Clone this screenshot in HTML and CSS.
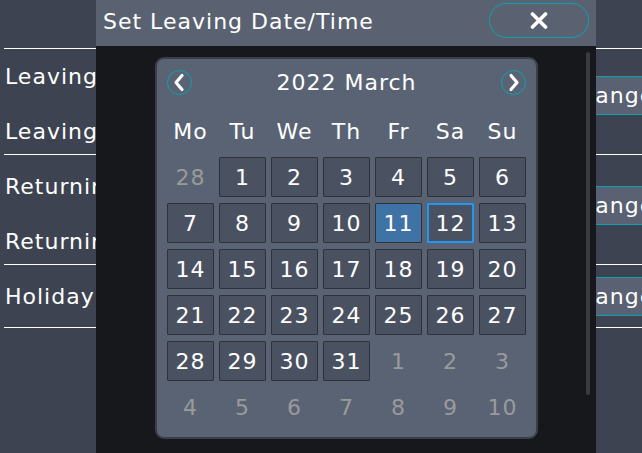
FILE: index.html
```html
<!DOCTYPE html>
<html>
<head>
<meta charset="utf-8">
<link rel="stylesheet" href="styles.css">
</head>
<body>
<div class="screen">
  <section class="group g1">
    <div class="labels">
      <div class="label">Leaving Date</div>
      <div class="label">Leaving Time</div>
    </div>
    <div class="action"><button class="change">Change</button></div>
  </section>
  <section class="group g2">
    <div class="labels">
      <div class="label">Returning Date</div>
      <div class="label">Returning Time</div>
    </div>
    <div class="action"><button class="change">Change</button></div>
  </section>
  <section class="group g3">
    <div class="labels">
      <div class="label">Holiday Type</div>
    </div>
    <div class="action"><button class="change">Change</button></div>
  </section>
</div>

<div class="dialog">
  <header class="dlg-head">
    <span class="dlg-title">Set Leaving Date/Time</span>
    <button class="close" aria-label="Close">
      <svg width="18" height="17" viewBox="0 0 18 17"><path d="M2.5 2 L15.5 15 M15.5 2 L2.5 15" stroke="#fff" stroke-width="3.6" stroke-linecap="round" fill="none"/></svg>
    </button>
  </header>
  <div class="dlg-body">
    <div class="calendar">
      <div class="cal-head">
        <button class="nav" aria-label="Previous month">
          <svg width="25" height="25" viewBox="0 0 25 25"><path d="M15 5.5 L9 12.5 L15 19.5" stroke="#fff" stroke-width="3.2" stroke-linecap="round" stroke-linejoin="round" fill="none"/></svg>
        </button>
        <span class="month">2022 March</span>
        <button class="nav" aria-label="Next month">
          <svg width="25" height="25" viewBox="0 0 25 25"><path d="M10 5.5 L16 12.5 L10 19.5" stroke="#fff" stroke-width="3.2" stroke-linecap="round" stroke-linejoin="round" fill="none"/></svg>
        </button>
      </div>
      <div class="weekdays">
        <span>Mo</span><span>Tu</span><span>We</span><span>Th</span><span>Fr</span><span>Sa</span><span>Su</span>
      </div>
      <div class="days">
        <span class="day out">28</span>
        <span class="day">1</span><span class="day">2</span><span class="day">3</span><span class="day">4</span><span class="day">5</span><span class="day">6</span>
        <span class="day">7</span><span class="day">8</span><span class="day">9</span><span class="day">10</span><span class="day selected">11</span><span class="day today">12</span><span class="day">13</span>
        <span class="day">14</span><span class="day">15</span><span class="day">16</span><span class="day">17</span><span class="day">18</span><span class="day">19</span><span class="day">20</span>
        <span class="day">21</span><span class="day">22</span><span class="day">23</span><span class="day">24</span><span class="day">25</span><span class="day">26</span><span class="day">27</span>
        <span class="day">28</span><span class="day">29</span><span class="day">30</span><span class="day">31</span>
        <span class="day out">1</span><span class="day out">2</span><span class="day out">3</span>
        <span class="day out">4</span><span class="day out">5</span><span class="day out">6</span><span class="day out">7</span><span class="day out">8</span><span class="day out">9</span><span class="day out">10</span>
      </div>
    </div>
    <div class="scrollbar"></div>
  </div>
</div>
</body>
</html>
```

FILE: styles.css
```css
html, body {
  margin: 0;
  padding: 0;
}
body {
  width: 642px;
  height: 453px;
  overflow: hidden;
  background: #3d4351;
  font-family: "DejaVu Sans", "Liberation Sans", sans-serif;
  letter-spacing: 1px;
  color: #fff;
  position: relative;
}
.screen {
  padding: 48px 0 0 4px;
}
.group {
  display: grid;
  grid-template-columns: 1fr 92px;
  border-top: 1px solid #ffffff;
}
.g3 {
  border-bottom: 1px solid #ffffff;
}
.labels {
  display: flex;
  flex-direction: column;
  gap: 27px;
  padding-left: 1px;
}
.label {
  font-size: 22px;
  line-height: 28px;
  white-space: nowrap;
}
.g1 .labels { padding-top: 14px; padding-bottom: 8px; }
.g2 .labels { padding-top: 18px; padding-bottom: 8px; }
.g3 .labels { padding-top: 18px; padding-bottom: 16px; }
.change {
  display: block;
  width: 100%;
  height: 39px;
  background: #596172;
  border: none;
  border-top: 1px solid #0ba3ad;
  border-bottom: 1px solid #0ba3ad;
  color: #fff;
  font-family: inherit;
  letter-spacing: inherit;
  font-size: 22px;
  text-align: left;
  padding: 0 0 0 14px;
  white-space: nowrap;
  overflow: hidden;
}
.g1 .change { margin-top: 27px; }
.g2 .change { margin-top: 31px; }
.g3 .change { margin-top: 12px; }

.dialog {
  position: absolute;
  left: 96px;
  top: 0;
  width: 500px;
  height: 453px;
  display: flex;
  flex-direction: column;
  background: #17181c;
}
.dlg-head {
  height: 46px;
  flex: none;
  background: #5a6272;
  display: flex;
  align-items: center;
  justify-content: space-between;
  padding: 0 7px;
  box-sizing: border-box;
}
.dlg-title {
  font-size: 22px;
  margin-top: -4px;
}
.close {
  width: 100px;
  height: 35px;
  margin-top: -5px;
  border: 1px solid #0ba3ad;
  border-radius: 18px;
  background: transparent;
  display: flex;
  align-items: center;
  justify-content: center;
  padding: 0;
}
.dlg-body {
  flex: 1;
  display: flex;
  align-items: flex-start;
  padding: 6px 0 0 59px;
}
.calendar {
  margin-top: 5px;
  width: 383px;
  box-sizing: border-box;
  background: #5a6374;
  border: 2px solid #3a3f48;
  border-radius: 9px;
  padding: 10px 10px 10px;
}
.cal-head {
  display: flex;
  align-items: center;
  justify-content: space-between;
  height: 26px;
}
.nav {
  width: 25px;
  height: 25px;
  padding: 0;
  border: 1px solid #0ba3ad;
  border-radius: 50%;
  background: transparent;
  display: flex;
  align-items: center;
  justify-content: center;
}
.nav svg {
  display: block;
  margin: -1px;
}
.month {
  font-size: 22px;
}
.weekdays {
  display: grid;
  grid-template-columns: repeat(7, 47px);
  column-gap: 5px;
  margin-top: 16px;
  height: 40px;
  align-items: center;
  justify-items: center;
  font-size: 22px;
}
.days {
  margin-top: 6px;
  display: grid;
  grid-template-columns: repeat(7, 47px);
  grid-auto-rows: 40px;
  column-gap: 5px;
  row-gap: 6px;
}
.day {
  box-sizing: border-box;
  display: flex;
  align-items: center;
  justify-content: center;
  font-size: 22px;
  background: #4a5261;
  border: 1px solid #2d323b;
  border-radius: 1px;
}
.day.out {
  background: transparent;
  border-color: transparent;
  color: #9a9a9a;
}
.day.selected {
  background: #3f72a5;
}
.day.today {
  border: 2px solid #2196f3;
}
.scrollbar {
  margin-left: 48px;
  width: 4px;
  height: 343px;
  background: #3a3b3f;
  border-radius: 2px;
}
```
